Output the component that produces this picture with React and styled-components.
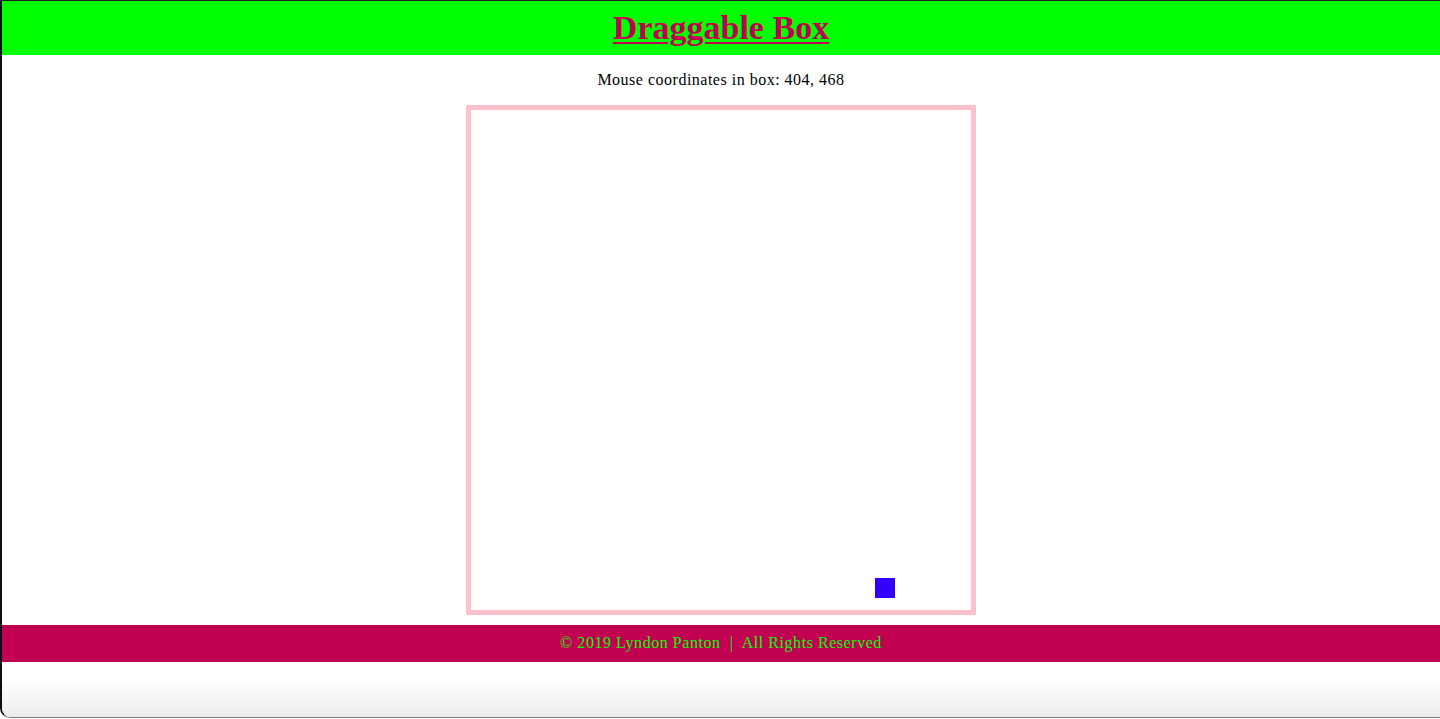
import React, { useState } from "react";
import styled, { createGlobalStyle } from "styled-components";

const GlobalStyle = createGlobalStyle`
  html, body {
    margin: 0;
    padding: 0;
    background: #ffffff;
    font-family: "Liberation Serif", "Times New Roman", serif;
  }
`;

const App = () => {
  const [pos] = useState({ x: 404, y: 468 });

  return (
    <>
      <GlobalStyle />
      <Frame>
        <Header>
          <Title>Draggable Box</Title>
        </Header>
        <Main>
          <Coords>
            Mouse coordinates in box: {pos.x}, {pos.y}
          </Coords>
          <Box>
            <Handle style={{ left: pos.x, top: pos.y }} />
          </Box>
        </Main>
        <Footer>© 2019 Lyndon Panton &nbsp;|&nbsp; All Rights Reserved</Footer>
        <Shade />
      </Frame>
    </>
  );
};

export default App;

const Frame = styled.div`
  display: flex;
  flex-direction: column;
  height: 718px;
  box-sizing: border-box;
  border-top: 1px solid #1b1b24;
  border-left: 2px solid #0d0d1a;
  border-bottom: 1px solid #7a7a7a;
  border-bottom-left-radius: 10px;
  overflow: hidden;
`;

const Header = styled.header`
  display: flex;
  align-items: center;
  justify-content: center;
  height: 54px;
  background: #00ff00;
`;

const Title = styled.h1`
  margin: 0;
  font-size: 34px;
  font-weight: bold;
  color: #c20052;
  text-decoration: underline;
  text-underline-offset: 3px;
  text-decoration-thickness: 2px;
`;

const Main = styled.main`
  display: flex;
  flex-direction: column;
  align-items: center;
`;

const Coords = styled.p`
  margin: 15px 0 0;
  height: 20px;
  line-height: 20px;
  font-size: 16px;
  letter-spacing: 0.5px;
  color: #000000;
`;

const Box = styled.div`
  position: relative;
  width: 500px;
  height: 500px;
  margin-top: 15px;
  border: 5px solid #ffc0cb;
`;

const Handle = styled.div`
  position: absolute;
  width: 20px;
  height: 20px;
  background: #3300ff;
  cursor: move;
`;

const Footer = styled.footer`
  display: flex;
  align-items: center;
  justify-content: center;
  height: 37px;
  margin-top: 10px;
  padding-bottom: 2px;
  box-sizing: border-box;
  background: #c20052;
  color: #00ff00;
  font-size: 16px;
  letter-spacing: 0.55px;
`;

const Shade = styled.div`
  flex: 1;
  background: linear-gradient(to bottom, #ffffff 0%, #ffffff 30%, #ececec 100%);
`;
